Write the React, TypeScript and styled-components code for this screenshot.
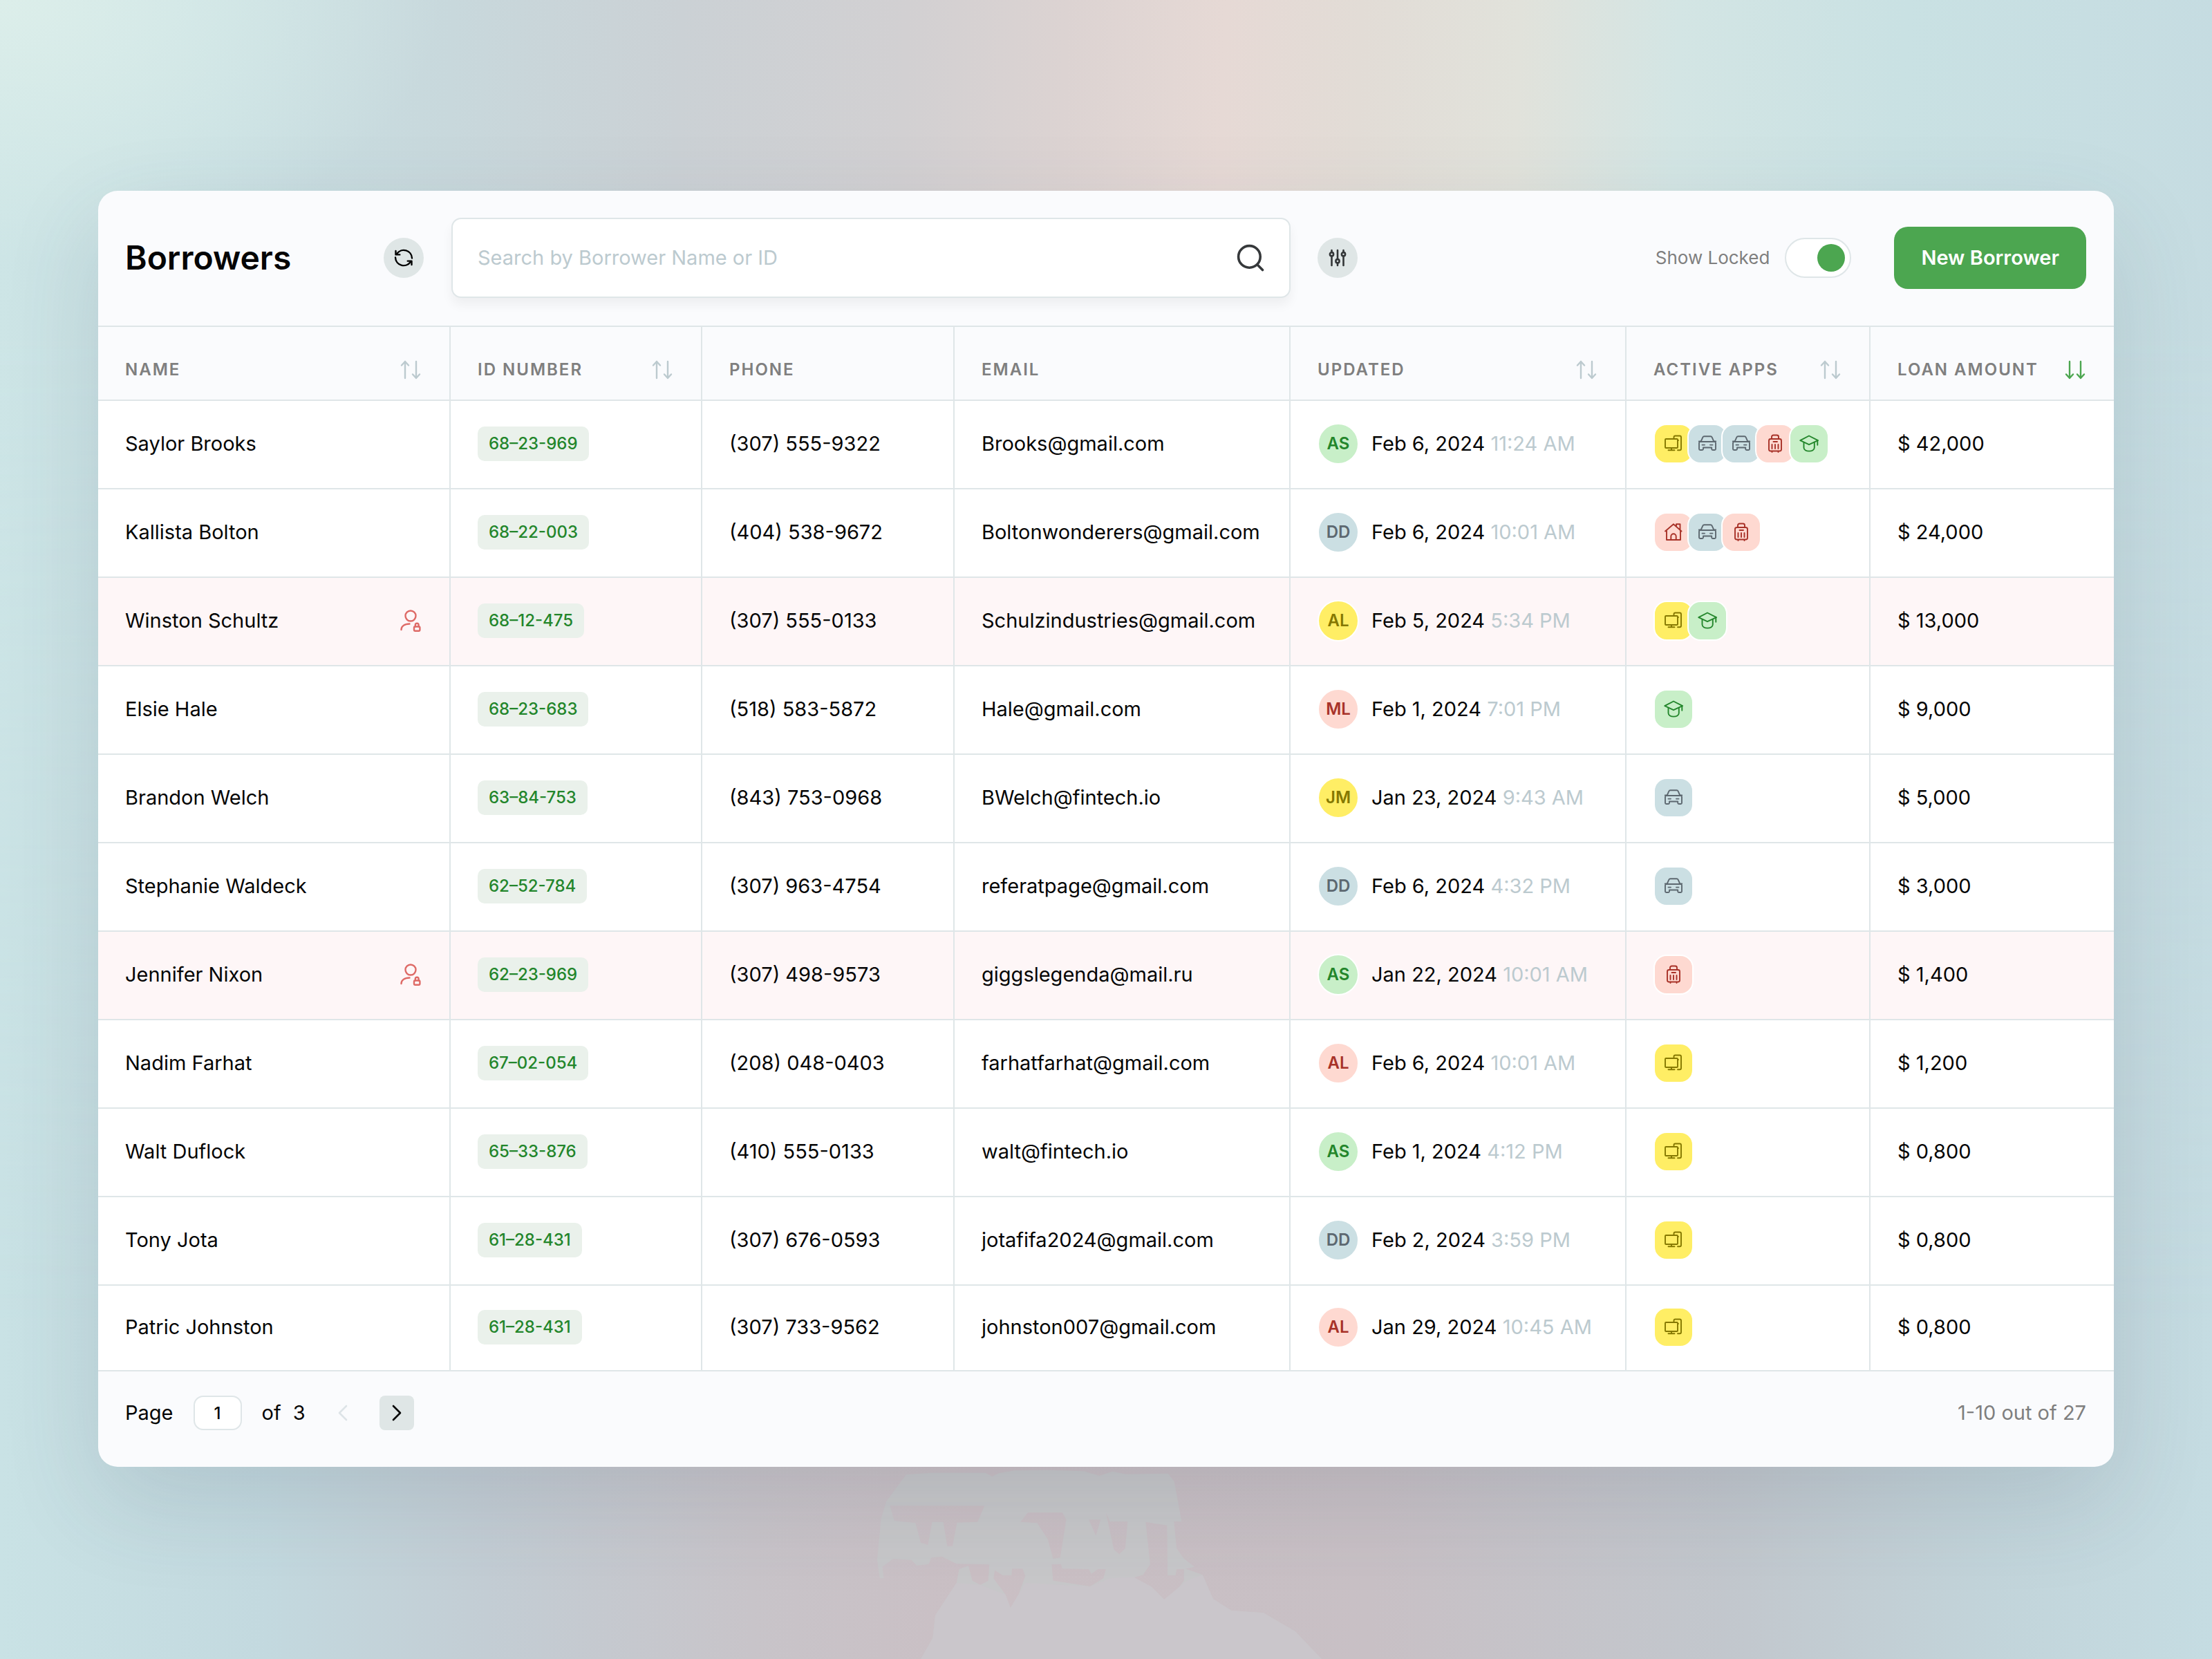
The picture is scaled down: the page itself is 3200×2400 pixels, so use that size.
import React, { useState } from 'react';
import styled, { createGlobalStyle, css } from 'styled-components';

const line = '#dfe6e8';
const green = '#4ca650';

const GlobalStyle = createGlobalStyle`
  *, *::before, *::after { box-sizing: border-box; }
  html { font-optical-sizing: none; }
  body {
    margin: 0;
    font-family: Inter, "Liberation Sans", sans-serif;
    font-size: 29px;
    line-height: 36px;
    color: #050505;
  }
  button, input { font: inherit; color: inherit; }
  button { border: 0; padding: 0; cursor: pointer; }
`;

const Page = styled.div`
  position: relative;
  isolation: isolate;
  overflow: hidden;
  min-height: 100vh;
  padding: 276px 142px 140px;
  background: linear-gradient(90deg, #c9e2e5 0%, #c3d9df 12%, #c3cdd4 22%, #c8c4c9 34%, #cabfc4 44%, #c8c0c5 62%, #c2c7cd 78%, #c2d4da 90%, #c5dce2 100%);
  &::before {
    content: '';
    position: absolute;
    inset: 0;
    z-index: -2;
    background:
      radial-gradient(ellipse 20% 16% at 0% 0%, #dceeea 0%, rgba(220, 238, 234, 0) 100%),
      linear-gradient(92deg, #cde5e6 0%, #c9e0e3 10%, #c8d8dc 20%, #cbd1d5 30%, #d2d0d2 40%, #dcd3d2 47%, #e6d9d5 54%, #e2dcd6 60%, #e1e2db 67%, #d3e5e4 74%, #c9e1e3 84%, #c5dbe1 100%);
    mask-image: linear-gradient(180deg, #000 0%, #000 20%, transparent 80%);
  }
`;

const Backdrop = styled.svg`
  position: absolute;
  left: 37.5%;
  bottom: 0;
  z-index: -1;
  width: 780px;
  height: 300px;
`;

const Card = styled.main`
  border-radius: 28px;
  background: #fafbfd;
  box-shadow: 0 50px 140px rgba(60, 70, 90, 0.14);
  overflow: hidden;
`;

const Toolbar = styled.header`
  display: flex;
  align-items: center;
  height: 197px;
  padding: 0 40px 2px 39px;
  border-bottom: 2px solid ${line};
`;

const TitleGroup = styled.div`
  display: flex;
  align-items: center;
  justify-content: space-between;
  width: 432px;
  margin-right: 40px;
`;

const Title = styled.h1`
  margin: 0;
  font-size: 48px;
  line-height: 58px;
  font-weight: 600;
`;

const RoundButton = styled.button`
  display: grid;
  place-items: center;
  width: 58px;
  height: 58px;
  border-radius: 50%;
  background: #dfe6e6;
  color: #333638;
`;

const SearchBox = styled.label`
  display: flex;
  align-items: center;
  flex: 0 1 1214px;
  height: 116px;
  margin-right: 39px;
  padding: 0 36px;
  border: 2px solid ${line};
  border-radius: 14px;
  background: #fff;
  box-shadow: 0 10px 16px rgba(0, 0, 0, 0.05);
`;

const SearchInput = styled.input`
  flex: 1;
  min-width: 0;
  padding: 0;
  border: 0;
  outline: 0;
  background: none;
  &::placeholder { color: #bccacf; opacity: 1; }
`;

const Actions = styled.div`
  display: flex;
  align-items: center;
  margin-left: auto;
`;

const ToggleLabel = styled.label`
  display: flex;
  align-items: center;
  gap: 22px;
  margin-right: 62px;
  font-size: 26px;
  color: #7f7f7f;
`;

const Toggle = styled.input`
  appearance: none;
  display: flex;
  align-items: center;
  width: 96px;
  height: 58px;
  margin: 0;
  padding: 0 7px;
  border: 2px solid ${line};
  border-radius: 29px;
  background: #fff;
  cursor: pointer;
  &::before {
    content: '';
    width: 40px;
    height: 40px;
    border-radius: 50%;
    background: #b9c6ca;
  }
  &:checked { justify-content: flex-end; }
  &:checked::before { background: ${green}; }
`;

const PrimaryButton = styled.button`
  height: 90px;
  padding: 0 39px;
  border-radius: 20px;
  background: ${green};
  color: #fff;
  font-weight: 600;
`;

const Table = styled.table`
  width: 100%;
  table-layout: fixed;
  border-collapse: separate;
  border-spacing: 0;
`;

const Col = styled.col<{ $w: number }>`
  width: ${(p) => p.$w}px;
`;

const HeadCell = styled.th`
  height: 107px;
  padding: 18px 41px 0 39px;
  border-bottom: 2px solid ${line};
  text-align: left;
  font-size: 24px;
  font-weight: 600;
  letter-spacing: 2px;
  color: #7f7f7f;
  white-space: nowrap;
  &:not(:last-child) { border-right: 2px solid ${line}; }
`;

const Split = styled.div`
  display: flex;
  align-items: center;
  justify-content: space-between;
`;

const SortButton = styled.button<{ $active?: boolean }>`
  display: grid;
  background: none;
  color: ${(p) => (p.$active ? green : '#bccacf')};
`;

const Row = styled.tr<{ $locked?: boolean }>`
  background: ${(p) => (p.$locked ? '#fef6f7' : '#fff')};
  &:last-child > td { height: 124px; }
`;

const Cell = styled.td`
  height: 128px;
  padding: 0 41px 3px 39px;
  border-bottom: 2px solid ${line};
  white-space: nowrap;
  &:not(:last-child) { border-right: 2px solid ${line}; }
`;

const IdTag = styled.span`
  display: inline-block;
  padding: 0 16px;
  border-radius: 10px;
  background: #eaf1eb;
  color: #23862b;
  font-size: 24px;
  line-height: 50px;
  font-weight: 500;
  vertical-align: middle;
`;

type Tone = 'green' | 'blue' | 'yellow' | 'red';
const tones: Record<Tone, { bg: string; fg: string }> = {
  green: { bg: '#c8efc8', fg: '#23862b' },
  blue: { bg: '#cbdfe3', fg: '#5d6870' },
  yellow: { bg: '#ffee65', fg: '#857800' },
  red: { bg: '#fed9d1', fg: '#a83228' },
};

const chip = css<{ $tone: Tone }>`
  display: grid;
  place-items: center;
  flex: none;
  border: 2px solid #fff;
  background: ${(p) => tones[p.$tone].bg};
  color: ${(p) => tones[p.$tone].fg};
`;

const Avatar = styled.span<{ $tone: Tone }>`
  ${chip}
  width: 60px;
  height: 60px;
  border-radius: 50%;
  font-size: 24px;
  font-weight: 600;
`;

const Updated = styled.div`
  display: flex;
  align-items: center;
  gap: 18px;
`;

const Time = styled.span`
  color: #bccacf;
`;

const Apps = styled.div`
  display: flex;
`;

const AppTile = styled.span<{ $tone: Tone }>`
  ${chip}
  width: 58px;
  height: 58px;
  border-radius: 19px;
  & + & { margin-left: -9px; }
`;

const LockMark = styled.span`
  display: grid;
  color: #de6a66;
`;

const Footer = styled.footer`
  display: flex;
  align-items: center;
  padding: 35px 40px 53px 39px;
`;

const PageLabel = styled.label`
  display: flex;
  align-items: center;
  gap: 29px;
`;

const PageInput = styled.input`
  width: 70px;
  height: 50px;
  padding: 0;
  border: 2px solid ${line};
  border-radius: 14px;
  background: #fff;
  text-align: center;
  font-size: 24px;
  font-weight: 500;
`;

const PageTotal = styled.span`
  margin-left: 17px;
`;

const PagerButtons = styled.div`
  display: flex;
  gap: 28px;
  margin-left: 29px;
`;

const PagerButton = styled.button`
  display: grid;
  place-items: center;
  width: 50px;
  height: 50px;
  border-radius: 8px;
  background: #dfe6e6;
  &:disabled { background: none; color: #dde4e7; }
`;

const Range = styled.span`
  margin-left: auto;
  color: #7f7f7f;
`;

const stroke = {
  fill: 'none',
  stroke: 'currentColor',
  strokeLinecap: 'round' as const,
  strokeLinejoin: 'round' as const,
};

const RefreshIcon = () => (
  <svg width="28" height="28" viewBox="0 0 28 28" {...stroke} stroke="#000" strokeWidth="2.4">
    <path d="M26 14.5A12 12 0 0 0 4.200 8" />
    <path d="M2.500 4v5.400h5.800" />
    <path d="M2 13.500A12 12 0 0 0 23.800 20" />
    <path d="M25.500 24v-5.400h-5.800" />
  </svg>
);

const SearchIcon = () => (
  <svg width="40" height="40" viewBox="0 0 40 40" {...stroke} stroke="#36393b" strokeWidth="3.6">
    <circle cx="18.400" cy="18.400" r="15.800" />
    <path d="M30 30l7.500 7.500" />
  </svg>
);

const SlidersIcon = () => (
  <svg width="26" height="26" viewBox="0 0 26 26" {...stroke} strokeWidth="2.6">
    <path d="M4.500 2v3M4.500 10.400V24M13 2v13M13 20.400V24M21.500 2v3M21.500 10.400V24" />
    <circle cx="4.500" cy="7.700" r="2.600" />
    <circle cx="13" cy="17.700" r="2.600" />
    <circle cx="21.500" cy="7.700" r="2.600" />
  </svg>
);

const SortIcon = ({ descending }: { descending?: boolean }) => (
  <svg width="30" height="28" viewBox="0 0 30 28" {...stroke} strokeWidth="2.4">
    {descending ? <path d="M7 2v24M2 20.500L7 26l5-5.500" /> : <path d="M7 26V2M2 7.500L7 2l5 5.500" />}
    <path d="M23 2v24M18 20.500l5 5.500 5-5.500" />
  </svg>
);

const UserLockIcon = () => (
  <svg width="30" height="32" viewBox="0 0 30 32" {...stroke} strokeWidth="2.4">
    <circle cx="15" cy="9" r="7.500" />
    <path d="M1.500 29c0-5 4.500-8.500 12-8.500" />
    <rect x="20" y="24.500" width="8.400" height="6.300" rx="1.200" />
    <path d="M21.800 24.500v-2.300a2.400 2.400 0 0 1 4.800 0v2.300" />
  </svg>
);

const ChevronIcon = ({ left }: { left?: boolean }) => (
  <svg width="16" height="24" viewBox="0 0 16 24" {...stroke} strokeWidth="2.600">
    <path d={left ? 'M13 2L3 12l10 10' : 'M3 2l10 10L3 22'} />
  </svg>
);

type App = 'computer' | 'car' | 'luggage' | 'school' | 'home';

const appTone: Record<App, Tone> = {
  computer: 'yellow',
  car: 'blue',
  luggage: 'red',
  school: 'green',
  home: 'red',
};

const appPaths: Record<App, React.ReactNode> = {
  computer: (
    <>
      <rect x="2" y="7" width="18" height="13" rx="1" />
      <path d="M11 20v3.300M6.500 23.300h9M14.500 7v-2.500a2 2 0 0 1 2-2h6.500a2 2 0 0 1 2 2v16.800a2 2 0 0 1-2 2h-3M20 9h1" />
    </>
  ),
  car: (
    <>
      <path d="M4.500 11L7.200 4.800A2.500 2.500 0 0 1 9.500 3.300h9a2.500 2.500 0 0 1 2.300 1.500L23.500 11M1.800 10.500h2.500M23.700 10.500h2.500" />
      <path d="M4.500 11h19a2 2 0 0 1 2.500 2v8.500a1.500 1.500 0 0 1-1.500 1.500h-2.800a1.500 1.500 0 0 1-1.500-1.500v-2H8v2A1.500 1.500 0 0 1 6.500 23H3.500A1.500 1.500 0 0 1 2 21.500V13a2 2 0 0 1 2.500-2z" />
      <path d="M6.500 15.600h3.500M18 15.600h3.500" />
    </>
  ),
  luggage: (
    <>
      <rect x="5" y="7" width="18" height="17.500" rx="2.500" />
      <path d="M9 7V4a2.500 2.500 0 0 1 2.500-2.500h5A2.500 2.500 0 0 1 19 4v3M11.500 11h5.500M9.500 15v6M14 15v6M18.500 15v6M9.500 24.800v1.200M18.500 24.800v1.200" />
    </>
  ),
  school: (
    <>
      <path d="M14 2.500L27 9.200 14 15.200 1.300 9.200z" />
      <path d="M6.500 12v7.500c0 6.800 15.300 6.800 15.300 0V12M26.300 9.500v6.200" />
    </>
  ),
  home: (
    <>
      <path d="M2 12.500L14 2.300 25.500 12.500M4 11v14h20V11M18 5.500V2.300h5.500V10" />
      <path d="M10.300 25v-5a3.700 3.700 0 0 1 7.400 0v5" />
    </>
  ),
};

const AppIcon = ({ app }: { app: App }) => (
  <svg width="28" height="28" viewBox="0 0 28 28" role="img" aria-label={app} {...stroke} strokeWidth="1.900">
    {appPaths[app]}
  </svg>
);

interface Borrower {
  name: string;
  id: string;
  phone: string;
  email: string;
  by: [string, Tone];
  date: string;
  time: string;
  apps: App[];
  amount: string;
  locked?: boolean;
}

const borrowers: Borrower[] = [
  { name: 'Saylor Brooks', id: '68–23-969', phone: '(307) 555-9322', email: 'Brooks@gmail.com', by: ['AS', 'green'], date: 'Feb 6, 2024', time: '11:24 AM', apps: ['computer', 'car', 'car', 'luggage', 'school'], amount: '42,000' },
  { name: 'Kallista Bolton', id: '68–22-003', phone: '(404) 538-9672', email: 'Boltonwonderers@gmail.com', by: ['DD', 'blue'], date: 'Feb 6, 2024', time: '10:01 AM', apps: ['home', 'car', 'luggage'], amount: '24,000' },
  { name: 'Winston Schultz', id: '68–12-475', phone: '(307) 555-0133', email: 'Schulzindustries@gmail.com', by: ['AL', 'yellow'], date: 'Feb 5, 2024', time: '5:34 PM', apps: ['computer', 'school'], amount: '13,000', locked: true },
  { name: 'Elsie Hale', id: '68–23-683', phone: '(518) 583-5872', email: 'Hale@gmail.com', by: ['ML', 'red'], date: 'Feb 1, 2024', time: '7:01 PM', apps: ['school'], amount: '9,000' },
  { name: 'Brandon Welch', id: '63–84-753', phone: '(843) 753-0968', email: 'BWelch@fintech.io', by: ['JM', 'yellow'], date: 'Jan 23, 2024', time: '9:43 AM', apps: ['car'], amount: '5,000' },
  { name: 'Stephanie Waldeck', id: '62–52-784', phone: '(307) 963-4754', email: 'referatpage@gmail.com', by: ['DD', 'blue'], date: 'Feb 6, 2024', time: '4:32 PM', apps: ['car'], amount: '3,000' },
  { name: 'Jennifer Nixon', id: '62–23-969', phone: '(307) 498-9573', email: 'giggslegenda@mail.ru', by: ['AS', 'green'], date: 'Jan 22, 2024', time: '10:01 AM', apps: ['luggage'], amount: '1,400', locked: true },
  { name: 'Nadim Farhat', id: '67–02-054', phone: '(208) 048-0403', email: 'farhatfarhat@gmail.com', by: ['AL', 'red'], date: 'Feb 6, 2024', time: '10:01 AM', apps: ['computer'], amount: '1,200' },
  { name: 'Walt Duflock', id: '65–33-876', phone: '(410) 555-0133', email: 'walt@fintech.io', by: ['AS', 'green'], date: 'Feb 1, 2024', time: '4:12 PM', apps: ['computer'], amount: '0,800' },
  { name: 'Tony Jota', id: '61–28-431', phone: '(307) 676-0593', email: 'jotafifa2024@gmail.com', by: ['DD', 'blue'], date: 'Feb 2, 2024', time: '3:59 PM', apps: ['computer'], amount: '0,800' },
  { name: 'Patric Johnston', id: '61–28-431', phone: '(307) 733-9562', email: 'johnston007@gmail.com', by: ['AL', 'red'], date: 'Jan 29, 2024', time: '10:45 AM', apps: ['computer'], amount: '0,800' },
];

const columns: { title: string; width: number; sort?: 'both' | 'desc' }[] = [
  { title: 'NAME', width: 510, sort: 'both' },
  { title: 'ID NUMBER', width: 364, sort: 'both' },
  { title: 'PHONE', width: 365 },
  { title: 'EMAIL', width: 486 },
  { title: 'UPDATED', width: 486, sort: 'both' },
  { title: 'ACTIVE APPS', width: 353, sort: 'both' },
  { title: 'LOAN AMOUNT', width: 352, sort: 'desc' },
];

export default function App() {
  const [showLocked, setShowLocked] = useState(true);
  const [query, setQuery] = useState('');
  const rows = borrowers.filter(
    (b) => (showLocked || !b.locked) && (b.name + b.id).toLowerCase().includes(query.toLowerCase()),
  );

  return (
    <>
      <GlobalStyle />
      <Page>
        <Backdrop viewBox="0 0 2038 900" preserveAspectRatio="none" aria-hidden="true">
          <path
            fill="#c7c7c9"
            fillRule="evenodd"
            d="M290 100L380 92H590L615 108 640 94 700 82 830 80 960 85 1020 105 1070 86 1120 98 1280 95 1303 130 1331 303H1302L1312 420 1340 465 1380 500 1345 508 1410 535 1450 640 1520 690 1640 700 1760 780 1860 900H345L390 810 400 710 480 570 490 510 525 495 540 560 570 578 600 560 604 490 480 487 425 455 385 460 375 488 330 495 310 470 240 465 200 500 205 550 190 550 180 470 195 290 215 215zM228 234L245 300 325 310 345 395 372 405 388 305 430 305 445 410 465 410 482 308 560 305 586 235zM750 264L722 305 785 310 825 380 845 465 872 460 895 295 880 264zM980 295L1007 365 1025 295zM1045 265L1075 425 1095 445 1118 420 1127 303 1060 303zM1195 305L1212 490 1185 535 1152 545 1170 570 1215 585 1265 642 1300 620 1340 560 1340 510 1312 510 1308 537H1278L1276 320zM690 508L688 537H655L625 515 620 550 665 620 684 678 705 650 740 540 730 508zM840 490L845 560 985 585 1035 550 1045 510 1015 510 990 530 980 510 880 508 875 488z"
          />
          <path fill="#cac6cb" d="M480 570L570 578 665 620 684 678 740 570 985 585 1060 550 1150 545 1215 585 1265 642 1350 560 1410 535 1450 640 1520 690 1640 700 1760 780 1860 900H345L390 810 400 710z" />
        </Backdrop>
        <Card>
          <Toolbar>
            <TitleGroup>
              <Title>Borrowers</Title>
              <RoundButton type="button" aria-label="Refresh"><RefreshIcon /></RoundButton>
            </TitleGroup>
            <SearchBox>
              <SearchInput
                type="text"
                aria-label="Search borrowers"
                placeholder="Search by Borrower Name or ID"
                value={query}
                onChange={(e) => setQuery(e.target.value)}
              />
              <SearchIcon />
            </SearchBox>
            <RoundButton type="button" aria-label="Filters"><SlidersIcon /></RoundButton>
            <Actions>
              <ToggleLabel>
                Show Locked
                <Toggle type="checkbox" role="switch" checked={showLocked} onChange={(e) => setShowLocked(e.target.checked)} />
              </ToggleLabel>
              <PrimaryButton type="button">New Borrower</PrimaryButton>
            </Actions>
          </Toolbar>

          <Table>
            <colgroup>
              {columns.map((c) => <Col key={c.title} $w={c.width} />)}
            </colgroup>
            <thead>
              <tr>
                {columns.map((c) => (
                  <HeadCell key={c.title} scope="col">
                    <Split>
                      {c.title}
                      {c.sort && (
                        <SortButton type="button" aria-label={`Sort by ${c.title.toLowerCase()}`} $active={c.sort === 'desc'}>
                          <SortIcon descending={c.sort === 'desc'} />
                        </SortButton>
                      )}
                    </Split>
                  </HeadCell>
                ))}
              </tr>
            </thead>
            <tbody>
              {rows.map((b) => (
                <Row key={b.name} $locked={b.locked}>
                  <Cell>
                    <Split>
                      {b.name}
                      {b.locked && <LockMark role="img" aria-label="Locked"><UserLockIcon /></LockMark>}
                    </Split>
                  </Cell>
                  <Cell><IdTag>{b.id}</IdTag></Cell>
                  <Cell>{b.phone}</Cell>
                  <Cell>{b.email}</Cell>
                  <Cell>
                    <Updated>
                      <Avatar $tone={b.by[1]}>{b.by[0]}</Avatar>
                      <span>{b.date} <Time>{b.time}</Time></span>
                    </Updated>
                  </Cell>
                  <Cell>
                    <Apps>
                      {b.apps.map((a, i) => <AppTile key={i} $tone={appTone[a]}><AppIcon app={a} /></AppTile>)}
                    </Apps>
                  </Cell>
                  <Cell>$ {b.amount}</Cell>
                </Row>
              ))}
            </tbody>
          </Table>

          <Footer>
            <PageLabel>
              Page
              <PageInput type="text" defaultValue="1" />
              of
            </PageLabel>
            <PageTotal>3</PageTotal>
            <PagerButtons>
              <PagerButton type="button" aria-label="Previous page" disabled><ChevronIcon left /></PagerButton>
              <PagerButton type="button" aria-label="Next page"><ChevronIcon /></PagerButton>
            </PagerButtons>
            <Range>1-10 out of 27</Range>
          </Footer>
        </Card>
      </Page>
    </>
  );
}
